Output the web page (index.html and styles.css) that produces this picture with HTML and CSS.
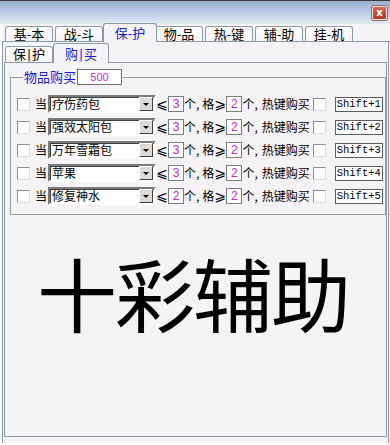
FILE: index.html
```html
<!DOCTYPE html>
<html lang="zh-CN">
<head>
    <meta charset="UTF-8">
    <meta name="viewport" content="width=device-width, initial-scale=1.0">
    <title>十彩辅助</title>
    <link rel="stylesheet" href="styles.css">
</head>
<body>
    <div class="window">
        <div class="titlebar">
            <div class="close">x</div>
        </div>
        <div class="tabs">
            <div class="tab">基-本</div>
            <div class="tab">战-斗</div>
            <div class="tab active">保-护</div>
            <div class="tab">物-品</div>
            <div class="tab">热-键</div>
            <div class="tab">辅-助</div>
            <div class="tab">挂-机</div>
        </div>
        <div class="page">
            <div class="subtabs">
                <div class="tab sub">保<span class="bar">|</span>护</div>
                <div class="tab sub active">购<span class="bar">|</span>买</div>
            </div>
            <div class="subpage">
                <fieldset class="group">
                    <legend><span class="legend-text">物品购买</span><span class="amount">500</span></legend>
                    <div class="rows"></div>
                </fieldset>
                <div class="brand">十彩辅助</div>
            </div>
        </div>
    </div>
    <script>
        const items = [
            { name: '疗伤药包', count: 3, slot: 2, key: 'Shift+1' },
            { name: '强效太阳包', count: 3, slot: 2, key: 'Shift+2' },
            { name: '万年雪霜包', count: 3, slot: 2, key: 'Shift+3' },
            { name: '苹果', count: 3, slot: 2, key: 'Shift+4' },
            { name: '修复神水', count: 2, slot: 2, key: 'Shift+5' }
        ];

        const rows = document.querySelector('.rows');
        items.forEach(item => {
            let row = document.createElement('div');
            row.classList.add('row');
            row.innerHTML = `
                <span class="check"></span>
                <span class="lbl when">当</span>
                <span class="combo"><span class="combo-text">${item.name}</span><span class="combo-btn"></span></span>
                <span class="sym">⩽</span>
                <span class="num">${item.count}</span>
                <span class="lbl">个,</span>
                <span class="lbl grid">格</span>
                <span class="sym">⩾</span>
                <span class="num">${item.slot}</span>
                <span class="lbl">个,</span>
                <span class="lbl hot">热键购买</span>
                <span class="check hot-check"></span>
                <span class="key">${item.key}</span>`;
            rows.appendChild(row);
        });
    </script>
</body>
</html>
```

FILE: styles.css
```css
* {
    margin: 0;
    padding: 0;
    box-sizing: border-box;
}
html, body {
    width: 390px;
    height: 445px;
    overflow: hidden;
    background: #f5f3f5;
    font-family: "Noto Sans CJK SC", "Noto Sans", sans-serif;
    font-size: 12px;
    color: #000;
}
.window {
    width: 390px;
    height: 445px;
    display: flex;
    flex-direction: column;
    background: #f5f3f5;
    border-left: 2px solid #fff;
    border-bottom: 2px solid #fff;
}
.titlebar {
    height: 24px;
    flex: none;
    margin-left: -2px;
    border-top: 1px solid #3c3c3c;
    background: linear-gradient(#97afd2, #c4d3e8 60%, #e3eaf4);
    display: flex;
    justify-content: flex-end;
    align-items: center;
    padding-right: 3px;
}
.close {
    width: 15px;
    height: 14px;
    border: 1px solid #f2e4e0;
    border-radius: 2px;
    background: linear-gradient(#d86a55, #b23a24);
    color: #fff;
    font-family: "DejaVu Sans", sans-serif;
    font-size: 10px;
    font-weight: bold;
    line-height: 11px;
    text-align: center;
    box-shadow: 0 0 0 1px #9a6a64;
}
.tabs {
    height: 18px;
    flex: none;
    display: flex;
    align-items: flex-end;
    padding-left: 3px;
    border-bottom: 1px solid #8c9aa6;
}
.tab {
    width: 48px;
    height: 15px;
    margin-right: 2px;
    border: 1px solid #8c9aa6;
    border-bottom: none;
    border-radius: 3px 3px 0 0;
    background: linear-gradient(#fefefe, #f4f4f6);
    font-size: 13px;
    line-height: 14px;
    text-align: center;
    position: relative;
}
.tab.active {
    width: 54px;
    height: 19px;
    margin: 0 0 -1px -2px;
    background: #f5f3f5;
    color: #1a1ad0;
    line-height: 18px;
    z-index: 1;
}
.tab.active + .tab {
    margin-left: -2px;
}
.bar {
    font-family: "DejaVu Sans", sans-serif;
    font-size: 12px;
    margin: 0 1px;
}
.page {
    flex: 1;
    display: flex;
    flex-direction: column;
    border-left: 1px solid #8c9aa6;
    border-right: 1px solid #8c9aa6;
    margin-right: 1px;
    padding: 0 1px 0 1px;
}
.subtabs {
    height: 21px;
    flex: none;
    display: flex;
    align-items: flex-end;
    padding-left: 1px;
    border-bottom: 1px solid #8c9aa6;
}
.tab.sub {
    width: 48px;
    height: 16px;
    margin-right: 0;
}
.tab.sub.active {
    width: 56px;
    height: 20px;
    margin-left: 0;
    line-height: 19px;
}
.subpage {
    flex: 1;
    display: flex;
    flex-direction: column;
    align-items: stretch;
    border-left: 1px solid #8c9aa6;
    border-right: 1px solid #8c9aa6;
    border-bottom: 1px solid #8c9aa6;
    margin-bottom: 6px;
    padding: 6px 0 0 5px;
}
.group {
    border: 1px solid #9c9c9c;
    padding: 10px 0 9px 6px;
}
.group legend {
    margin-left: 6px;
    padding: 0 1px;
    display: flex;
    align-items: center;
    height: 16px;
}
.legend-text {
    color: #1a1ad0;
    font-size: 13px;
    line-height: 16px;
}
.amount {
    width: 45px;
    height: 16px;
    margin-left: 1px;
    border: 1px solid #707070;
    background: #fff;
    color: #d020d0;
    font-family: "Liberation Sans", sans-serif;
    font-size: 11px;
    line-height: 14px;
    text-align: center;
}
.rows {
    display: flex;
    flex-direction: column;
    gap: 5px;
}
.row {
    height: 18px;
    display: flex;
    align-items: center;
}
.row > * {
    flex: none;
}
.check {
    width: 13px;
    height: 13px;
    background: #fff;
    border: 1px solid #8e8f8f;
    border-right-color: #dcdcdc;
    border-bottom-color: #dcdcdc;
}
.lbl {
    font-size: 12px;
    line-height: 16px;
    white-space: nowrap;
}
.when {
    margin-left: 5px;
    margin-right: 1px;
}
.combo {
    width: 108px;
    height: 18px;
    display: flex;
    align-items: center;
    justify-content: space-between;
    background: #fff;
    border: 2px solid;
    border-color: #7b7b7b #fff #fff #7b7b7b;
    box-shadow: inset 1px 1px 0 #404040;
    padding: 0 1px 0 2px;
}
.combo-text {
    font-size: 12px;
    line-height: 14px;
}
.combo-btn {
    width: 14px;
    height: 14px;
    background: #dcdad6;
    border: 1px solid;
    border-color: #fff #404040 #404040 #fff;
    position: relative;
}
.combo-btn::after {
    content: "";
    position: absolute;
    left: 3px;
    top: 5px;
    border-left: 3px solid transparent;
    border-right: 3px solid transparent;
    border-top: 3px solid #000;
}
.sym {
    font-family: "DejaVu Sans", sans-serif;
    font-size: 14px;
    line-height: 16px;
    width: 12px;
    text-align: center;
}
.num {
    width: 16px;
    height: 16px;
    border: 1px solid #7d7d7d;
    background: #fff;
    color: #c828c8;
    font-family: "Liberation Sans", sans-serif;
    font-size: 12px;
    line-height: 14px;
    text-align: center;
}
.grid {
    margin-left: 3px;
}
.hot {
    margin-left: 4px;
}
.hot-check {
    margin-left: 3px;
}
.key {
    width: 48px;
    height: 15px;
    margin-left: 9px;
    border: 1px solid #5c5c5c;
    background: #fff;
    font-family: "Liberation Mono", monospace;
    font-size: 10.5px;
    line-height: 13px;
    text-align: center;
}
.brand {
    margin-top: 28px;
    padding-right: 10px;
    text-align: center;
    font-size: 80px;
    line-height: 96px;
    letter-spacing: -2px;
}
```
